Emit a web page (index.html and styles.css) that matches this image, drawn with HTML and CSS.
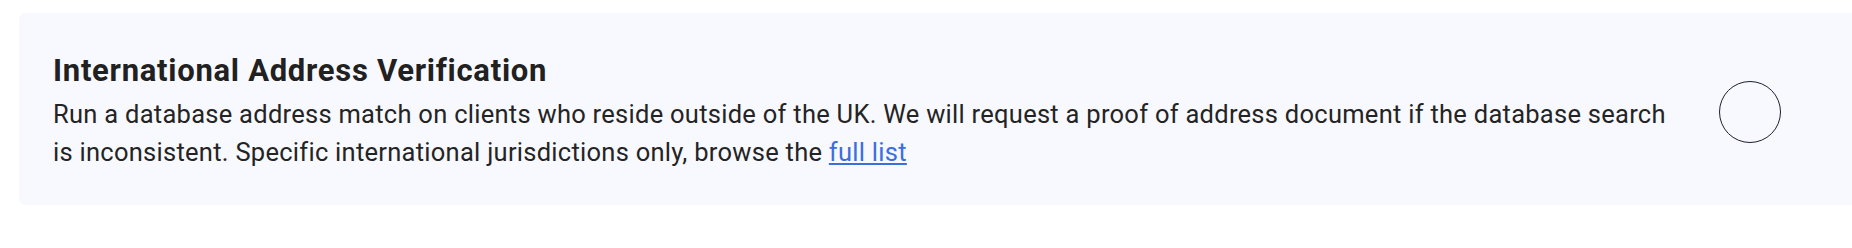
FILE: index.html
```html
<!DOCTYPE html>
<html lang="en">
<head>
    <meta charset="UTF-8">
    <meta name="viewport" content="width=device-width, initial-scale=1.0">
    <title>Address Verification</title>
    <link rel="stylesheet" href="styles.css">
</head>
<body>
    <div class="option-card">
        <div class="option-text">
            <h3>International Address Verification</h3>
            <p>Run a database address match on clients who reside outside of the UK. We will request a proof of address document if the database search is inconsistent. Specific international jurisdictions only, browse the <a href="#">full list</a></p>
        </div>
        <span class="option-toggle"></span>
    </div>
</body>
</html>
```

FILE: styles.css
```css
html, body {
    overflow: hidden;
}

body {
    font-family: Roboto, "Liberation Sans", Arial, sans-serif;
    background-color: #fff;
    margin: 0;
    padding: 13px 0 0 19px;
}

.option-card {
    display: flex;
    align-items: center;
    gap: 40px;
    background-color: #f8f9fe;
    border-radius: 6px 0 0 6px;
    padding: 40px 71px 33px 34px;
}

.option-text {
    flex: 1;
}

.option-text h3 {
    margin: 0;
    font-size: 31px;
    line-height: 36px;
    font-weight: 700;
    letter-spacing: 0.72px;
    color: #212121;
}

.option-text p {
    margin: 6px 0 0 0;
    font-size: 25.5px;
    line-height: 38.4px;
    letter-spacing: 0.27px;
    color: #242424;
}

.option-text a {
    color: #3a6fe0;
    text-decoration: underline;
}

.option-toggle {
    flex: none;
    box-sizing: border-box;
    width: 62px;
    height: 62px;
    border: 1.8px solid #1b2030;
    border-radius: 50%;
}
```
